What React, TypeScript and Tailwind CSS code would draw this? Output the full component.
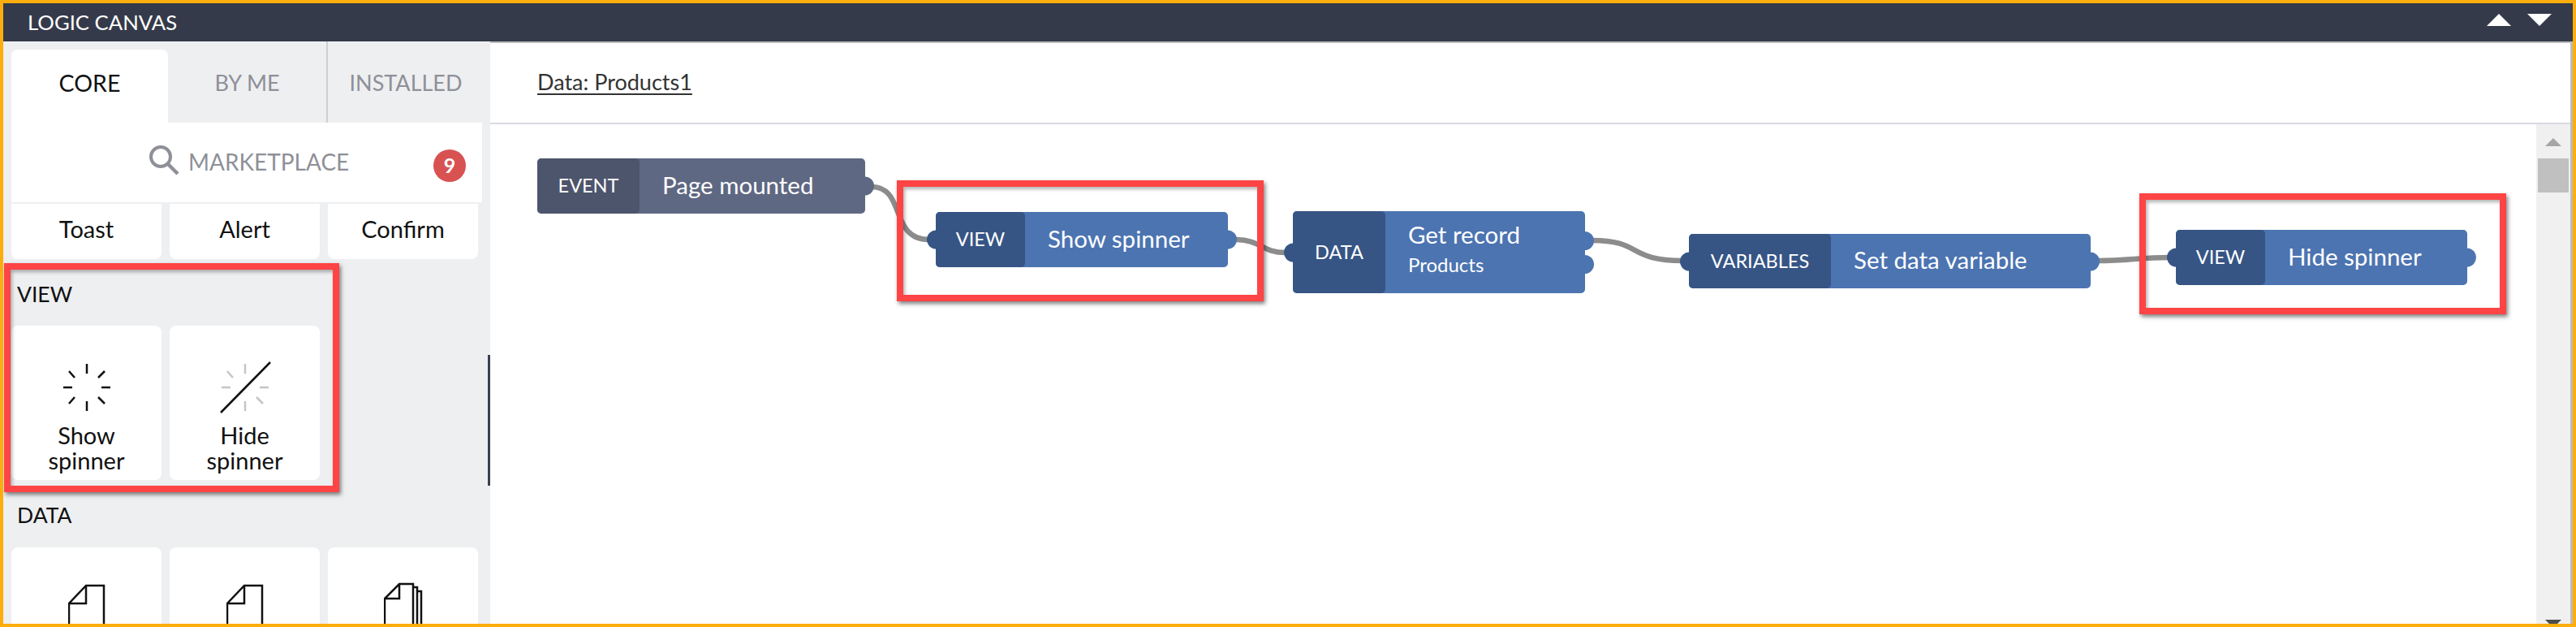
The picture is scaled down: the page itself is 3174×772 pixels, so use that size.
import React from 'react';

type NodeProps = {
  className: string;
  headClassName: string;
  label: string;
  title: string;
  subtitle?: string;
  muted?: boolean;
  doubleOut?: boolean;
};

function Port({ className }: { className: string }) {
  return <span className={`absolute h-[23px] w-[23px] rounded-full ${className}`} />;
}

function FlowNode({ className, headClassName, label, title, subtitle, muted, doubleOut }: NodeProps) {
  const head = muted ? 'bg-[#4d556c]' : 'bg-[#365585]';
  const body = muted ? 'bg-[#5f6882]' : 'bg-[#4c74b1]';
  return (
    <div className={`absolute ${className}`}>
      {!muted && <Port className={`${head} -left-[11px] top-1/2 -translate-y-1/2`} />}
      {doubleOut ? (
        <>
          <Port className={`${body} -right-[11px] top-[25px]`} />
          <Port className={`${body} -right-[11px] top-[54px]`} />
        </>
      ) : (
        <Port className={`${body} -right-[11px] top-1/2 -translate-y-1/2`} />
      )}
      <div className={`relative flex h-full rounded-[5px] ${body} text-white`}>
        <div className={`flex shrink-0 items-center justify-center rounded-[5px] text-[23.5px] ${head} ${headClassName}`}>
          {label}
        </div>
        <div className={`flex flex-col justify-center pl-[28px] ${subtitle ? 'pb-[7px]' : 'pb-[3px]'}`}>
          <div className="text-[29.5px] leading-[34px]">{title}</div>
          {subtitle && <div className="mt-[4px] text-[24px] leading-[32px]">{subtitle}</div>}
        </div>
      </div>
    </div>
  );
}

function ToolCard({ children, className = '' }: { children: React.ReactNode; className?: string }) {
  return <div className={`flex w-[185px] flex-col items-center rounded-[8px] bg-white text-[29px] text-[#111] ${className}`}>{children}</div>;
}

function ShowSpinnerIcon() {
  return (
    <svg width="60" height="60" viewBox="0 0 60 60" stroke="#111" strokeWidth="2.5" fill="none">
      <path d="M30 1v12M30 47v12M1 30h11M48 30h11M8 10l7 8M52 10l-8 8M8 50l7-8M52 50l-8-8" />
    </svg>
  );
}

function HideSpinnerIcon() {
  return (
    <svg width="64" height="64" viewBox="0 0 64 64" fill="none">
      <path d="M32 3v12M32 49v12M3 32h11M50 32h11M10 12l7 8M54 52l-8-8" stroke="#c4c5c9" strokeWidth="2.5" />
      <path d="M63 1L2 63" stroke="#111" strokeWidth="2.5" />
    </svg>
  );
}

function DocIcon() {
  return (
    <svg width="46" height="60" viewBox="0 0 46 60" fill="none" stroke="#111" strokeWidth="2.5">
      <path d="M22 2h22v58H1V24L22 2zM22 2v22H1" />
    </svg>
  );
}

function DocStackIcon() {
  return (
    <svg width="48" height="62" viewBox="0 0 48 62" fill="none" stroke="#111" strokeWidth="2.5">
      <path d="M37 6h4v56M41 11h5v51M19 2h17v58H1V20L19 2zM19 2v18H1" />
    </svg>
  );
}

function RedBox({ className }: { className: string }) {
  return (
    <div
      className={`pointer-events-none absolute border-[8px] border-[#fe4444] shadow-[2px_3px_5px_rgba(0,0,0,0.5),inset_2px_3px_4px_rgba(0,0,0,0.3)] ${className}`}
    />
  );
}

function Sidebar() {
  return (
    <aside className="relative h-full w-[600px] shrink-0 overflow-hidden bg-[#eeeff1]">
      <div className="flex h-[100px] pl-[10px] text-[27px] text-[#8e9098]">
        <div className="mt-[10px] flex w-[193px] items-center justify-center rounded-t-[8px] bg-white pb-[8px] text-[28.5px] text-[#111]">CORE</div>
        <div className="flex w-[195px] items-center justify-center pt-[2px]">BY ME</div>
        <div className="flex flex-1 items-center justify-center border-l-2 border-[#cfd0d3] pr-[8px] pt-[2px]">INSTALLED</div>
      </div>
      <div className="relative ml-[10px] flex h-[98px] w-[580px] items-center bg-white pb-[2px] pl-[169px] text-[28px] text-[#8e9098]">
        <svg width="38" height="38" viewBox="0 0 38 38" fill="none" stroke="#8e9098" className="mr-[11px] mb-[4px]">
          <circle cx="15" cy="15" r="12" strokeWidth="4" />
          <path d="M24 24l12 12" strokeWidth="4.5" />
        </svg>
        MARKETPLACE
        <span className="absolute left-[520px] top-[33px] flex h-[40px] w-[40px] items-center justify-center rounded-full bg-[#d95252] text-[25px] font-bold text-white">
          9
        </span>
      </div>
      <div className="mt-[2px] flex gap-[10px] pl-[10px]">
        {['Toast', 'Alert', 'Confirm'].map((t) => (
          <ToolCard key={t} className="h-[68px] rounded-t-none pt-[9px]">
            {t}
          </ToolCard>
        ))}
      </div>
      <div className="mt-[27px] pl-[17px] text-[26.5px] leading-[32px] text-[#111]">VIEW</div>
      <div className="mt-[23px] flex gap-[10px] pl-[10px]">
        <ToolCard className="h-[190px] pt-[46px] leading-[31px]">
          <ShowSpinnerIcon />
          <div className="mt-[13px] text-center">
            Show
            <br />
            spinner
          </div>
        </ToolCard>
        <ToolCard className="h-[190px] pt-[44px] leading-[31px]">
          <HideSpinnerIcon />
          <div className="mt-[11px] text-center">
            Hide
            <br />
            spinner
          </div>
        </ToolCard>
      </div>
      <div className="mt-[27px] pl-[17px] text-[26.5px] leading-[32px] text-[#111]">DATA</div>
      <div className="mt-[24px] flex gap-[10px] pl-[10px]">
        <ToolCard className="h-[190px] pt-[45px]">
          <DocIcon />
        </ToolCard>
        <ToolCard className="h-[190px] pt-[45px]">
          <DocIcon />
        </ToolCard>
        <ToolCard className="h-[190px] pt-[43px]">
          <DocStackIcon />
        </ToolCard>
      </div>
      <div className="absolute right-0 top-[386px] h-[161px] w-[3px] bg-[#3a3f50]" />
    </aside>
  );
}

function Canvas() {
  return (
    <div className="relative min-w-0 flex-1 overflow-hidden bg-white">
      <svg className="absolute inset-0 h-full w-full" fill="none" stroke="#8c8c8c" strokeWidth="6.5">
        <path d="M470 77C512 77 492 142 540 142" />
        <path d="M918 142C950 142 950 158 980 158" />
        <path d="M1358 143C1420 143 1400 168 1470 168" />
        <path d="M1980 168C2020 168 2030 164 2070 164" />
      </svg>
      <FlowNode muted className="left-[58px] top-[42px] h-[68px] w-[404px]" headClassName="w-[126px]" label="EVENT" title="Page mounted" />
      <FlowNode className="left-[549px] top-[108px] h-[68px] w-[360px]" headClassName="w-[110px]" label="VIEW" title="Show spinner" />
      <FlowNode doubleOut className="left-[989px] top-[107px] h-[101px] w-[360px]" headClassName="w-[114px]" label="DATA" title="Get record" subtitle="Products" />
      <FlowNode className="left-[1477px] top-[135px] h-[67px] w-[495px]" headClassName="w-[175px]" label="VARIABLES" title="Set data variable" />
      <FlowNode className="left-[2077px] top-[130px] h-[68px] w-[359px]" headClassName="w-[110px]" label="VIEW" title="Hide spinner" />
    </div>
  );
}

function ScrollBar() {
  return (
    <div className="flex w-[42px] shrink-0 flex-col items-center overflow-hidden bg-[#f0f0f0] pt-[17px]">
      <svg width="20" height="10" viewBox="0 0 20 10" fill="#a6a6a6">
        <polygon points="10,0 20,10 0,10" />
      </svg>
      <div className="mt-[15px] h-[42px] w-[38px] bg-[#c0c0c0]" />
      <svg width="20" height="10" viewBox="0 0 20 10" fill="#4d4d4d" className="mt-auto mb-[-5px] shrink-0">
        <polygon points="0,0 20,0 10,10" />
      </svg>
    </div>
  );
}

export default function App() {
  return (
    <div className="relative flex h-[772px] w-[3174px] flex-col overflow-hidden border-4 border-[#fdad0d] bg-white font-[Lato,sans-serif]">
      <header className="flex h-[47px] shrink-0 items-center justify-between bg-[#353a4a] pl-[30px] pr-[26px] text-[25.7px] text-white">
        <span>LOGIC CANVAS</span>
        <div className="mb-[6px] flex gap-[20px]">
          <svg width="30" height="15" viewBox="0 0 30 15" fill="#fff">
            <polygon points="15,0 30,15 0,15" />
          </svg>
          <svg width="30" height="15" viewBox="0 0 30 15" fill="#fff">
            <polygon points="0,0 30,0 15,15" />
          </svg>
        </div>
      </header>
      <div className="flex min-h-0 flex-1">
        <Sidebar />
        <main className="flex min-w-0 flex-1 flex-col border-r-[3px] border-t-2 border-[#bbbbbb]">
          <div className="flex h-[100px] shrink-0 items-center border-b-2 border-[#d9d9e0] pb-[2px] pl-[58px]">
            <span className="text-[27px] text-[#333] underline underline-offset-[4px]">Data: Products1</span>
          </div>
          <div className="flex min-h-0 flex-1">
            <Canvas />
            <ScrollBar />
          </div>
        </main>
      </div>
      <RedBox className="left-[1px] top-[320px] h-[282px] w-[413px]" />
      <RedBox className="left-[1101px] top-[218px] h-[149px] w-[452px]" />
      <RedBox className="left-[2632px] top-[234px] h-[149px] w-[452px]" />
    </div>
  );
}
